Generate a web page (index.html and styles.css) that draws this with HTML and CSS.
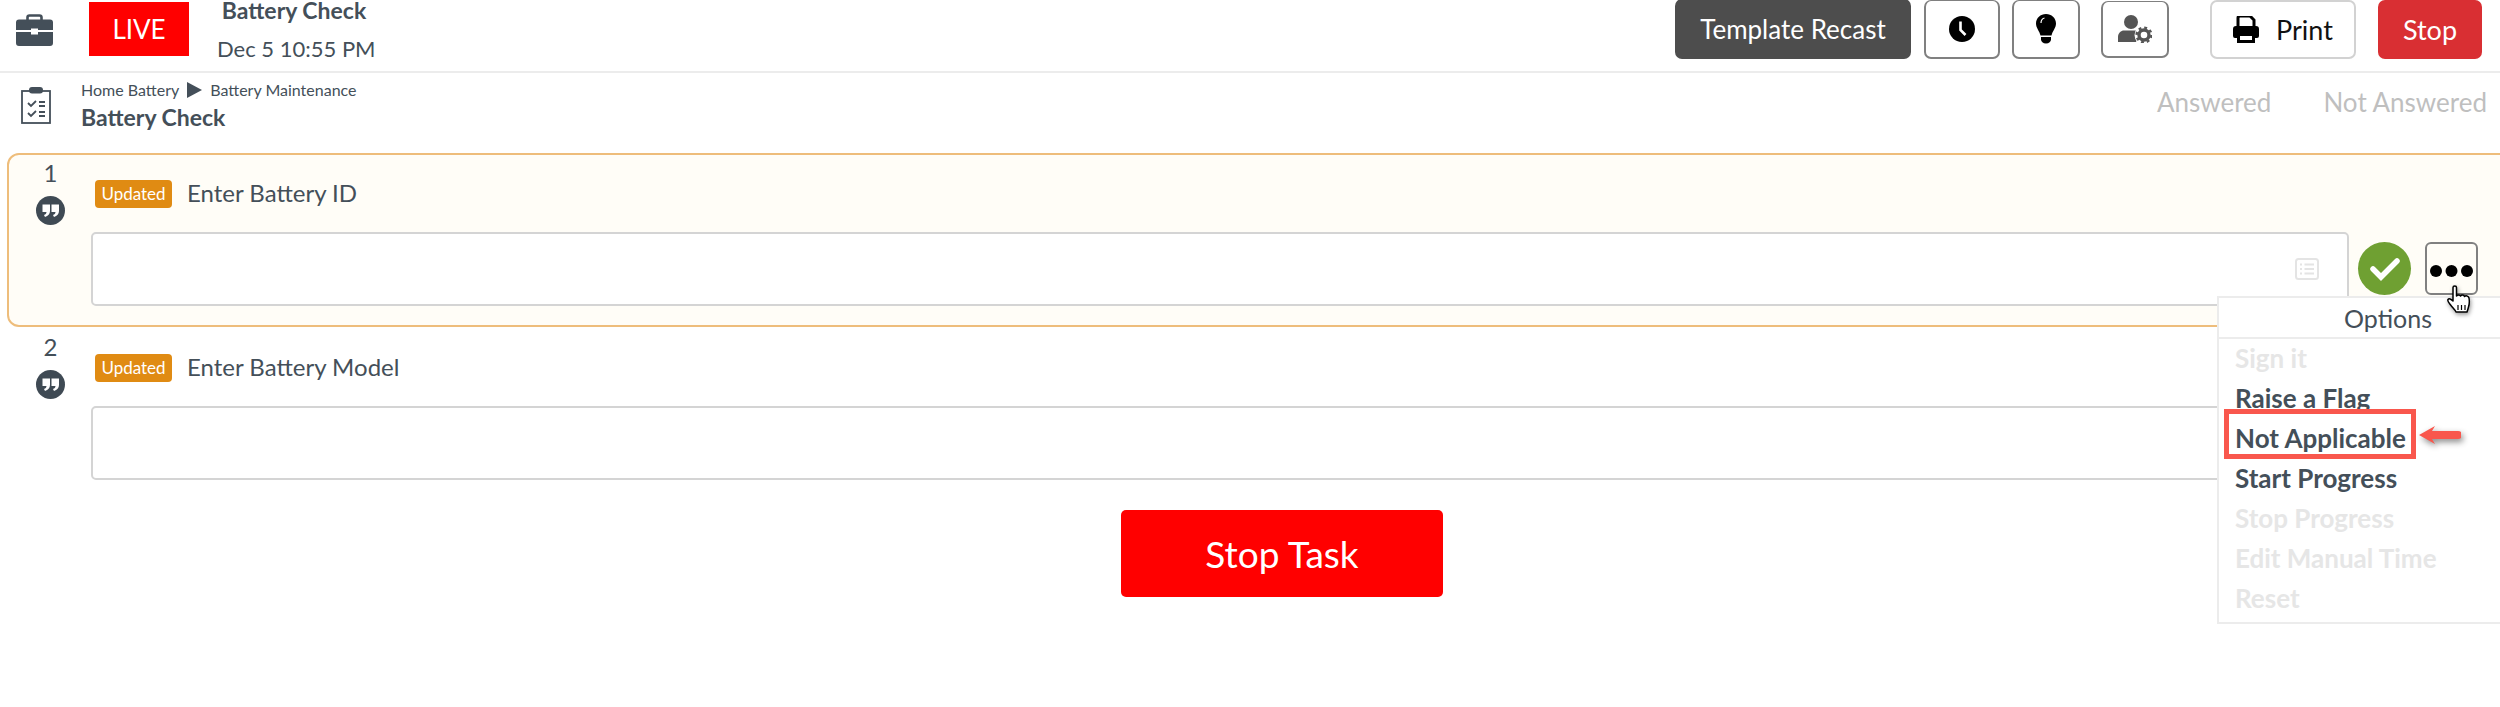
FILE: index.html
```html
<!DOCTYPE html>
<html lang="en">
<head>
  <meta charset="UTF-8" />
  <meta name="viewport" content="width=device-width, initial-scale=1" />
  <title>Battery Check</title>
  <link rel="stylesheet" href="styles.css">
</head>
<body>
  <div class="page">
    <header class="topbar">
      <svg class="case-icon" viewBox="0 0 37 32" width="37" height="32">
        <path d="M11.5 7V3.5a2 2 0 0 1 2-2h10a2 2 0 0 1 2 2V7" fill="none" stroke="#444f59" stroke-width="2.6"/>
        <path d="M3 5.5h31a3 3 0 0 1 3 3v7.5H22v-1.500h-7v1.500H0V8.500a3 3 0 0 1 3-3z" fill="#444f59"/>
        <path d="M0 18h15v2.500h7V18h15v11a3 3 0 0 1-3 3H3a3 3 0 0 1-3-3z" fill="#444f59"/>
      </svg>
      <div class="live">LIVE</div>
      <div class="task-info">
        <div class="task-name">Battery Check</div>
        <div class="task-date">Dec 5 10:55 PM</div>
      </div>
      <div class="actions">
        <button class="btn btn-dark">Template Recast</button>
        <button class="btn btn-icon btn-clock">
          <svg viewBox="0 0 26 26" width="26" height="26">
            <circle cx="13" cy="13" r="13" fill="#000"/>
            <path d="M11.500 5.500v8.500l5 5" fill="none" stroke="#fff" stroke-width="2.600"/>
          </svg>
        </button>
        <button class="btn btn-icon btn-bulb">
          <svg viewBox="0 0 20 30" width="20" height="30">
            <path d="M10 0c5.500 0 10 4 10 9.500 0 4.500-3.500 7.500-4.500 12h-11C3.500 17 0 14 0 9.500 0 4 4.500 0 10 0z" fill="#000"/>
            <path d="M5 9c0-2.500 1.500-4.500 3.500-5" fill="none" stroke="#fff" stroke-width="1.200"/>
            <path d="M5 23h10v2.500c0 2-2 4-5 4s-5-2-5-4z" fill="#000"/>
          </svg>
        </button>
        <button class="btn btn-icon btn-admin">
          <svg viewBox="0 0 34 28" width="34" height="28">
            <circle cx="13" cy="7" r="7" fill="#555"/>
            <path d="M0 27v-5c0-4 3-6.500 6-6.500h13c1.500 0 2.500.5 3 1L18 27z" fill="#555"/>
            <circle cx="26" cy="20" r="9.500" fill="#fff"/>
            <circle cx="26" cy="20" r="5" fill="none" stroke="#555" stroke-width="3.400"/>
            <circle cx="26" cy="20" r="7.400" fill="none" stroke="#555" stroke-width="2.400" stroke-dasharray="2.900 2.910"/>
          </svg>
        </button>
        <button class="btn btn-print">
          <svg viewBox="0 0 26 27" width="26" height="27">
            <path d="M5 11V2a2 2 0 0 1 2-2h10l4 4v7" fill="none" stroke="#000" stroke-width="3"/>
            <path d="M3 10h20a3 3 0 0 1 3 3v7a2 2 0 0 1-2 2h-2v-4H4v4H2a2 2 0 0 1-2-2v-7a3 3 0 0 1 3-3z" fill="#000"/>
            <path d="M5.500 18.500h15V25.500h-15z" fill="none" stroke="#000" stroke-width="3"/>
          </svg>
          Print
        </button>
        <button class="btn btn-stop">Stop</button>
      </div>
    </header>

    <section class="subheader">
      <svg class="clip-icon" viewBox="0 0 30 37" width="30" height="37">
        <rect x="1" y="4" width="28" height="32" fill="none" stroke="#444f59" stroke-width="1.800"/>
        <rect x="8" y="0" width="14" height="6.500" rx="3" fill="#444f59"/>
        <path d="M7 16l3 3 5-5M7 26l3 3 5-5" fill="none" stroke="#444f59" stroke-width="1.800"/>
        <path d="M18 15h6M18 19h6M18 25h6M18 29h6" stroke="#444f59" stroke-width="1.800"/>
      </svg>
      <div class="crumbs">
        <div class="crumb-line">
          Home Battery
          <svg viewBox="0 0 15 16" width="15" height="16"><path d="M0 0l15 8-15 8z" fill="#444f59"/></svg>
          Battery Maintenance
        </div>
        <div class="crumb-title">Battery Check</div>
      </div>
      <div class="statuses">
        <span>Answered</span>
        <span>Not Answered</span>
      </div>
    </section>

    <div class="question question-active">
      <div class="q-side">
        <div class="q-num">1</div>
        <svg viewBox="0 0 29 29" width="29" height="29">
          <circle cx="14.500" cy="14.500" r="14.500" fill="#3f4a54"/>
          <path d="M6.500 8.500h7.500v6.500c0 3-2 5-5 6l-1-2c1.500-.5 2.500-1.500 2.500-3H6.500zM15.500 8.500H23v6.500c0 3-2 5-5 6l-1-2c1.500-.5 2.500-1.500 2.500-3h-4z" fill="#fff"/>
        </svg>
      </div>
      <div class="q-body">
        <div class="q-label"><span class="badge">Updated</span>Enter Battery ID</div>
        <div class="q-input-row">
          <div class="q-input">
            <svg viewBox="0 0 24 22" width="24" height="22">
              <rect x="1" y="1" width="22" height="20" rx="2.500" fill="none" stroke="#e4e4e4" stroke-width="2"/>
              <path d="M5 6.500h2M9.500 6.500H19M5 11h2M9.500 11H19M5 15.500h2M9.500 15.500H19" stroke="#e4e4e4" stroke-width="2"/>
            </svg>
          </div>
          <div class="check">
            <svg viewBox="0 0 30 24" width="30" height="24"><path d="M3 12l8 8L27 4" fill="none" stroke="#fff" stroke-width="5.500" stroke-linecap="round"/></svg>
          </div>
          <button class="more">
            <svg viewBox="0 0 44 12" width="44" height="12">
              <circle cx="6" cy="6" r="6"/><circle cx="21.500" cy="6" r="6"/><circle cx="37" cy="6" r="6"/>
            </svg>
          </button>
        </div>
      </div>
    </div>

    <div class="question">
      <div class="q-side">
        <div class="q-num">2</div>
        <svg viewBox="0 0 29 29" width="29" height="29">
          <circle cx="14.500" cy="14.500" r="14.500" fill="#3f4a54"/>
          <path d="M6.500 8.500h7.500v6.500c0 3-2 5-5 6l-1-2c1.500-.5 2.500-1.500 2.500-3H6.500zM15.500 8.500H23v6.500c0 3-2 5-5 6l-1-2c1.500-.5 2.500-1.500 2.500-3h-4z" fill="#fff"/>
        </svg>
      </div>
      <div class="q-body">
        <div class="q-label"><span class="badge">Updated</span>Enter Battery Model</div>
        <div class="q-input-row">
          <div class="q-input"></div>
        </div>
      </div>
    </div>

    <div class="stop-row">
      <button class="stop-task">Stop Task</button>
    </div>

    <!-- menu sits over the questions -->
    <div class="menu">
      <div class="menu-head">Options</div>
      <div class="menu-item off">Sign it</div>
      <div class="menu-item">Raise a Flag</div>
      <div class="menu-item">Not Applicable</div>
      <div class="menu-item">Start Progress</div>
      <div class="menu-item off">Stop Progress</div>
      <div class="menu-item off">Edit Manual Time</div>
      <div class="menu-item off">Reset</div>
    </div>
    <div class="red-box"></div>
    <svg class="red-arrow" viewBox="0 0 42 26" width="42" height="26">
      <path d="M0 13L16 4l-3 5h26a4 4 0 0 1 0 8H13l3 5z" fill="#f9574d"/>
    </svg>
    <svg class="hand" viewBox="0 0 30 30" width="30" height="30">
      <path d="M6 2.500c0-2 3.500-2 3.500 0V11c1-1.500 3.500-1.500 4 0 1-1.500 3.500-1.500 4 .5 1-1 4-1 4.500 1.500.5 3 .5 6-.5 9-.5 2-1 3.500-1.500 5H9c-1-2.500-3-4-5-6.500C2 18 0 16 1 14.500c1-1.500 3-.5 5 1.500z" fill="#fff" stroke="#000" stroke-width="1.500" stroke-linejoin="round"/>
      <path d="M11 20v5M14.500 20v5M18 20v5" stroke="#000" stroke-width="1.200"/>
    </svg>
  </div>
</body>
</html>
```

FILE: styles.css
```css
html, body {
  margin: 0;
  padding: 0;
  background: #fff;
}
body {
  font-family: 'Lato', 'Open Sans', sans-serif;
  color: #444f59;
}
.page {
  position: relative;
  width: 2500px;
  height: 707px;
  overflow: hidden;
}
.topbar {
  display: flex;
  align-items: flex-start;
  height: 71px;
  border-bottom: 2px solid #ececec;
  box-sizing: content-box;
}
.case-icon {
  margin: 14px 0 0 16px;
}
.live {
  width: 100px;
  height: 54px;
  margin: 2px 0 0 36px;
  background: #f00;
  color: #fff;
  font-size: 26px;
  line-height: 54px;
  text-align: center;
}
.task-info {
  margin-left: 28px;
  width: 154px;
  text-align: center;
  font-size: 22px;
  white-space: nowrap;
}
.task-name {
  font-size: 23px;
  font-weight: 700;
  line-height: 20px;
}
.task-date {
  line-height: 26px;
  margin-top: 16px;
}
.actions {
  display: flex;
  align-items: flex-start;
  margin-left: auto;
  padding-right: 18px;
}
.btn {
  display: flex;
  align-items: center;
  justify-content: center;
  height: 59px;
  padding: 0;
  border-radius: 7px;
  font-family: inherit;
  font-size: 27px;
  background: #fff;
  box-sizing: border-box;
}
.btn-dark {
  width: 236px;
  height: 60px;
  margin-top: -1px;
  background: #4d4d4d;
  border: none;
  color: #fff;
  font-size: 26px;
}
.btn-icon {
  border: 2px solid #808080;
  border-top-width: 1px;
}
.btn-clock {
  width: 76px;
  margin-left: 13px;
}
.btn-bulb {
  width: 68px;
  margin-left: 12px;
}
.btn-admin {
  width: 68px;
  height: 57px;
  margin: 1px 0 0 21px;
}
.btn-print {
  width: 146px;
  margin-left: 41px;
  gap: 17px;
  border: 2px solid #d2d2d2;
  color: #111;
}
.btn-stop {
  width: 104px;
  margin-left: 22px;
  background: #d92f33;
  border: none;
  color: #fff;
}
.subheader {
  display: flex;
  align-items: flex-start;
  height: 80px;
}
.clip-icon {
  margin: 14px 0 0 21px;
}
.crumbs {
  margin-left: 30px;
}
.crumb-line {
  display: flex;
  align-items: center;
  gap: 8px;
  height: 33px;
  font-size: 16px;
}
.crumb-title {
  font-size: 23px;
  font-weight: 700;
  line-height: 28px;
  margin-top: -3px;
}
.statuses {
  display: flex;
  gap: 52px;
  margin: 14px 13px 0 auto;
  color: #bfbfbf;
  font-size: 26px;
  line-height: 30px;
}
.question {
  display: flex;
  width: 2510px;
  height: 174px;
  margin-left: 7px;
  border: 2px solid transparent;
  border-radius: 12px;
  box-sizing: border-box;
}
.question-active {
  background: #fffdf7;
  border-color: #eebd7b;
}
.q-side {
  display: flex;
  flex-direction: column;
  align-items: center;
  width: 82px;
  padding-left: 1px;
  box-sizing: border-box;
  flex-shrink: 0;
}
.q-num {
  font-size: 24px;
  line-height: 32px;
  margin: 2px 0 7px;
}
.q-body {
  padding-top: 25px;
}
.q-label {
  display: flex;
  align-items: flex-start;
  height: 28px;
  margin-left: 4px;
  font-size: 24px;
  line-height: 26px;
}
.badge {
  height: 28px;
  width: 77px;
  flex-shrink: 0;
  margin-right: 15px;
  background: #e08b13;
  border-radius: 4px;
  color: #fff;
  font-size: 17px;
  line-height: 28px;
  text-align: center;
}
.q-input-row {
  display: flex;
  align-items: flex-start;
  margin-top: 24px;
}
.q-input {
  display: flex;
  align-items: center;
  justify-content: flex-end;
  width: 2258px;
  height: 74px;
  padding-right: 28px;
  background: #fff;
  border: 2px solid #d4d4d4;
  border-radius: 5px;
  box-sizing: border-box;
}
.check {
  display: flex;
  align-items: center;
  justify-content: center;
  width: 53px;
  height: 53px;
  margin: 10px 0 0 9px;
  background: #6fa032;
  border-radius: 50%;
}
.more {
  display: flex;
  align-items: flex-end;
  justify-content: center;
  width: 53px;
  height: 53px;
  margin: 10px 0 0 14px;
  padding: 0 0 16px;
  background: transparent;
  border: 2px solid #808080;
  border-radius: 6px;
  box-sizing: border-box;
}
.stop-row {
  display: flex;
  justify-content: center;
  padding: 9px 28px 0 92px;
}
.stop-task {
  width: 322px;
  height: 87px;
  background: #f00;
  border: none;
  border-radius: 5px;
  color: #fff;
  font-family: inherit;
  font-size: 37px;
}
.menu {
  position: absolute;
  left: 2217px;
  top: 296px;
  width: 342px;
  height: 328px;
  background: #fff;
  border: 2px solid #ececec;
  box-sizing: border-box;
  font-size: 26px;
}
.menu-head {
  height: 39px;
  border-bottom: 2px solid #ececec;
  font-size: 25px;
  line-height: 40px;
  text-align: center;
}
.menu-item {
  height: 40px;
  padding-left: 16px;
  font-weight: 700;
  line-height: 38px;
}
.menu-item.off {
  color: #e6e6e6;
}
.red-box {
  position: absolute;
  left: 2224px;
  top: 409px;
  width: 192px;
  height: 50px;
  border: 5px solid #f9574d;
  box-sizing: border-box;
}
.red-arrow {
  position: absolute;
  left: 2419px;
  top: 422px;
  filter: drop-shadow(2px 3px 3px rgba(0, 0, 0, 0.45));
}
.hand {
  position: absolute;
  left: 2447px;
  top: 285px;
  filter: drop-shadow(1px 2px 2px rgba(0, 0, 0, 0.4));
}
```
